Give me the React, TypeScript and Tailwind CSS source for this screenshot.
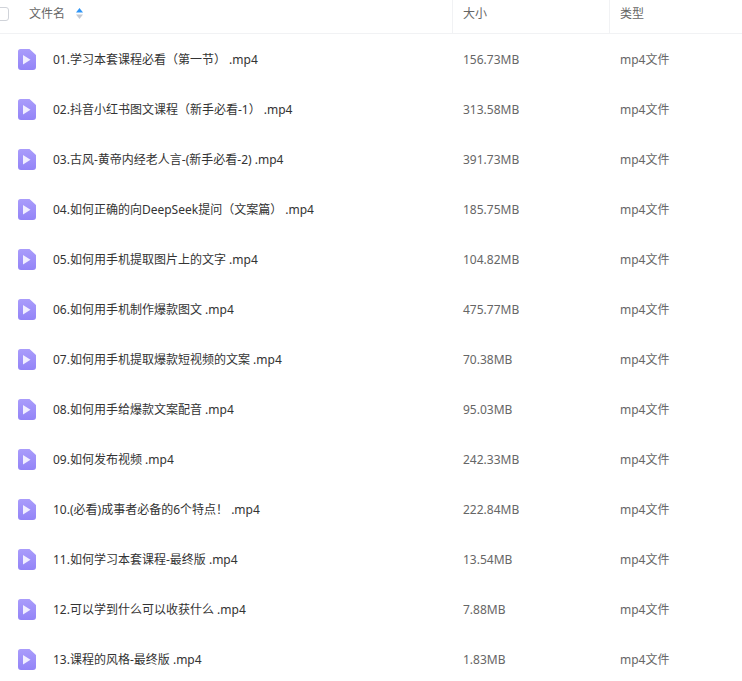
const files = [
  { name: '01.学习本套课程必看（第一节） .mp4', size: '156.73MB' },
  { name: '02.抖音小红书图文课程（新手必看-1） .mp4', size: '313.58MB' },
  { name: '03.古风-黄帝内经老人言-(新手必看-2) .mp4', size: '391.73MB' },
  { name: '04.如何正确的向DeepSeek提问（文案篇） .mp4', size: '185.75MB' },
  { name: '05.如何用手机提取图片上的文字 .mp4', size: '104.82MB' },
  { name: '06.如何用手机制作爆款图文 .mp4', size: '475.77MB' },
  { name: '07.如何用手机提取爆款短视频的文案 .mp4', size: '70.38MB' },
  { name: '08.如何用手给爆款文案配音 .mp4', size: '95.03MB' },
  { name: '09.如何发布视频 .mp4', size: '242.33MB' },
  { name: '10.(必看)成事者必备的6个特点！ .mp4', size: '222.84MB' },
  { name: '11.如何学习本套课程-最终版 .mp4', size: '13.54MB' },
  { name: '12.可以学到什么可以收获什么 .mp4', size: '7.88MB' },
  { name: '13.课程的风格-最终版 .mp4', size: '1.83MB' },
];

function VideoIcon() {
  return (
    <svg width="18" height="21" viewBox="0 0 18 21" className="shrink-0">
      <defs>
        <linearGradient id="videoFill" x1="0" y1="0" x2="0" y2="1">
          <stop offset="0" stopColor="#a99cfb" />
          <stop offset="1" stopColor="#9384f7" />
        </linearGradient>
      </defs>
      <path d="M2.5 0H11.5L18 6V18A3 3 0 0 1 15 21H3A3 3 0 0 1 0 18V2.5A2.5 2.5 0 0 1 2.5 0Z" fill="url(#videoFill)" />
      <path d="M5 6L12.5 10.8L5 15.6Z" fill="#f1eeff" />
    </svg>
  );
}

function SortIcon() {
  return (
    <svg width="7" height="11" viewBox="0 0 7 11" className="mb-[2px] ml-[11px]">
      <path d="M3.5 0L7 4.5H0Z" fill="#2f96f7" />
      <path d="M3.5 11L0 6.5H7Z" fill="#c4c9d2" />
    </svg>
  );
}

export default function App() {
  return (
    <div className="h-[681px] w-[742px] overflow-hidden bg-white text-xs font-['Noto_Sans','Noto_Sans_CJK_SC',sans-serif]">
      <div className="flex h-[34px] border-b border-[#f1f2f4] text-[#666]">
        <div className="flex w-[452px] items-center pb-[5px]">
          <div className="ml-[-6px] h-[14px] w-[15px] rounded-[3px] border border-[#d0d3d9] bg-white" />
          <span className="ml-5">文件名</span>
          <SortIcon />
        </div>
        <div className="flex w-[157px] items-center border-l border-[#f1f2f4] pb-[5px] pl-[10px]">大小</div>
        <div className="flex flex-1 items-center border-l border-[#f1f2f4] pb-[5px] pl-[10px]">类型</div>
      </div>
      {files.map((file) => (
        <div key={file.name} className="flex h-[50px] items-center">
          <div className="flex w-[453px] items-center pl-[18px]">
            <VideoIcon />
            <span className="ml-[17px] whitespace-pre pt-[2px] text-[#333]">{file.name}</span>
          </div>
          <div className="w-[157px] pl-[10px] pt-[2px] text-[#666]">{file.size}</div>
          <div className="pl-[10px] pt-[2px] text-[#666]">mp4文件</div>
        </div>
      ))}
    </div>
  );
}
